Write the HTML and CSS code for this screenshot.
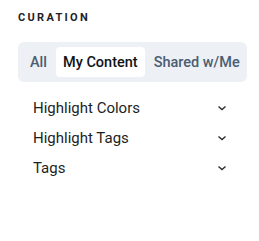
FILE: index.html
```html
<!DOCTYPE html>
<html lang="en">
<head>
    <meta charset="UTF-8">
    <title>Curation</title>
    <link rel="stylesheet" href="styles.css">
</head>
<body>
    <div class="curation-panel">

        <h4 class="panel-title">CURATION</h4>

        <div class="tab-bar">
            <button class="tab-button">All</button>
            <button class="tab-button active">My Content</button>
            <button class="tab-button">Shared w/Me</button>
        </div>

        <ul class="filter-list">
            <li class="filter-row">
                <span>Highlight Colors</span>
                <svg class="chevron" width="12" height="12" viewBox="0 0 12 12"><polyline points="2.5,4.5 6,7.5 9.5,4.5" /></svg>
            </li>
            <li class="filter-row">
                <span>Highlight Tags</span>
                <svg class="chevron" width="12" height="12" viewBox="0 0 12 12"><polyline points="2.5,4.5 6,7.5 9.5,4.5" /></svg>
            </li>
            <li class="filter-row">
                <span>Tags</span>
                <svg class="chevron" width="12" height="12" viewBox="0 0 12 12"><polyline points="2.5,4.5 6,7.5 9.5,4.5" /></svg>
            </li>
        </ul>

    </div>
</body>
</html>
```

FILE: styles.css
```css
body {
    font-family: Roboto, "Liberation Sans", sans-serif;
    background-color: white;
    margin: 0;
    padding: 0;
}

.curation-panel {
    width: 229px;
    padding: 11px 0 0 18px;
}

.panel-title {
    font-size: 11px;
    font-weight: 700;
    letter-spacing: 2.3px;
    line-height: 14px;
    color: #1f2328;
    margin: 0;
}

.tab-bar {
    display: flex;
    gap: 2px;
    margin-top: 17px;
    padding: 5px 5px;
    background-color: #edf0f4;
    border-radius: 6px;
}

.tab-button {
    font-family: inherit;
    font-size: 14.5px;
    font-weight: 500;
    height: 30px;
    padding: 0 7px;
    border: none;
    border-radius: 4px;
    background: transparent;
    color: #4a5d72;
    white-space: nowrap;
    cursor: pointer;
}

.tab-button.active {
    background-color: white;
    color: #111418;
}

.filter-list {
    list-style: none;
    margin: 11px 0 0 0;
    padding: 0 15px 0 15px;
}

.filter-row {
    display: flex;
    align-items: center;
    justify-content: space-between;
    height: 30px;
    font-size: 15px;
    color: #1c1f23;
}

.chevron {
    margin-right: 4px;
}

.chevron polyline {
    fill: none;
    stroke: #2a2d31;
    stroke-width: 1.4;
}
```
